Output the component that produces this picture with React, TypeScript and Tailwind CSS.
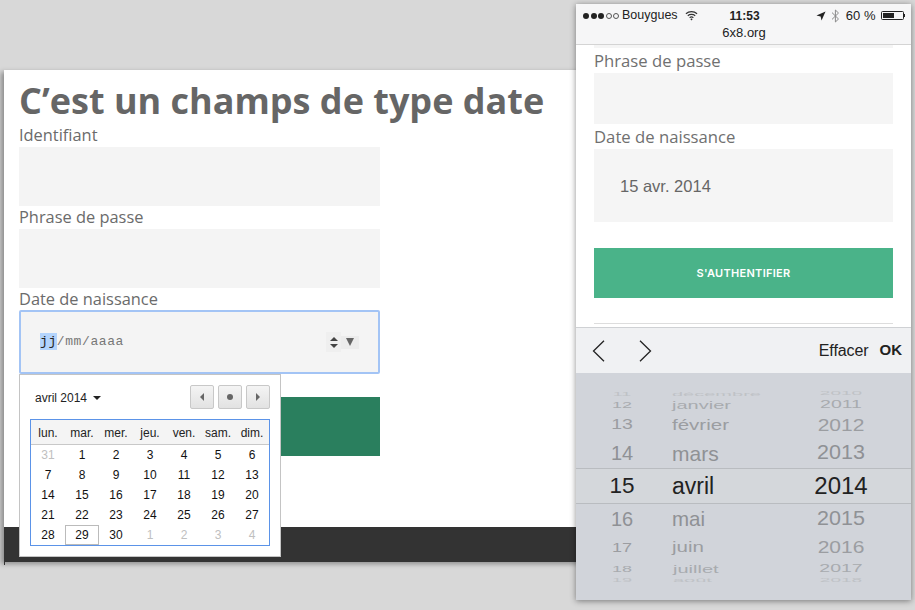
import { useMemo } from 'react';

const openSans = 'font-["Open_Sans",sans-serif]';
const helvetica = 'font-["Liberation_Sans",Arial,sans-serif]';

const weekDays = ['lun.', 'mar.', 'mer.', 'jeu.', 'ven.', 'sam.', 'dim.'];

const calendarDays = [
  31, 1, 2, 3, 4, 5, 6, 7, 8, 9, 10, 11, 12, 13, 14, 15, 16, 17, 18, 19, 20, 21, 22, 23, 24, 25,
  26, 27, 28, 29, 30, 1, 2, 3, 4,
];

const wheelRows = [
  { day: '11', month: 'décembre', year: '2010', height: 'h-[7px]', daySize: 'text-[18px]', monthSize: 'text-[20px]', yearSize: 'text-[19px]', squash: 'scale-y-[0.3]', color: 'text-[#bfc2c6]', monthPad: 'pl-[4px]' },
  { day: '12', month: 'janvier', year: '2011', height: 'h-[15px]', daySize: 'text-[18px]', monthSize: 'text-[20px]', yearSize: 'text-[19.5px]', squash: 'scale-y-[0.55]', color: 'text-[#a8abaf]', monthPad: 'pl-[4px]' },
  { day: '13', month: 'février', year: '2012', height: 'h-[26px]', daySize: 'text-[19.5px]', monthSize: 'text-[20.5px]', yearSize: 'text-[21px]', squash: 'scale-y-[0.75]', color: 'text-[#9b9da1]', monthPad: 'pl-[2px]' },
  { day: '14', month: 'mars', year: '2013', height: 'h-[30px]', daySize: 'text-[20px]', monthSize: 'text-[21px]', yearSize: 'text-[21.5px]', squash: 'scale-y-[0.97]', color: 'text-[#8f9195]', monthPad: 'pl-[1px]' },
  { day: '15', month: 'avril', year: '2014', height: 'h-[36px]', daySize: 'text-[22.5px]', monthSize: 'text-[23px]', yearSize: 'text-[24px]', squash: '', color: 'text-[#222222]', monthPad: '', active: true },
  { day: '16', month: 'mai', year: '2015', height: 'h-[30px]', daySize: 'text-[20px]', monthSize: 'text-[20.5px]', yearSize: 'text-[21.5px]', squash: 'scale-y-[0.97]', color: 'text-[#8f9195]', monthPad: 'pl-[1px]' },
  { day: '17', month: 'juin', year: '2016', height: 'h-[26px]', daySize: 'text-[18px]', monthSize: 'text-[20.5px]', yearSize: 'text-[21px]', squash: 'scale-y-[0.75]', color: 'text-[#9b9da1]', monthPad: 'pl-[1px]' },
  { day: '18', month: 'juillet', year: '2017', height: 'h-[17px]', daySize: 'text-[18px]', monthSize: 'text-[20px]', yearSize: 'text-[19.5px]', squash: 'scale-y-[0.55]', color: 'text-[#a8abaf]', monthPad: 'pl-[5px]' },
  { day: '19', month: 'août', year: '2018', height: 'h-[6px]', daySize: 'text-[18px]', monthSize: 'text-[20px]', yearSize: 'text-[19px]', squash: 'scale-y-[0.25]', color: 'text-[#bfc2c6]', monthPad: 'pl-[5px]' },
];

const PagerButton = ({ children }: { children: React.ReactNode }) => (
  <div className="flex h-[24px] w-[24px] items-center justify-center rounded-[2px] border border-[#c8c8c8] bg-gradient-to-b from-[#f4f4f4] to-[#e2e2e2]">
    {children}
  </div>
);

const CalendarPopup = () => {
  const cells = useMemo(
    () =>
      calendarDays.map((day, index) => ({
        day,
        muted: index === 0 || index > 30,
        today: index === 29,
      })),
    [],
  );

  return (
    <div className={`absolute left-[19px] top-[374px] z-10 h-[183px] w-[262px] border border-[#c4c4c4] bg-white px-[10px] pt-[10px] ${helvetica}`}>
      <div className="flex h-[24px] items-center justify-between">
        <div className="flex items-center gap-[6px] pt-[2px] pl-[5px] text-[12px] text-[#222]">
          <span>avril 2014</span>
          <span className="h-0 w-0 border-x-[4px] border-t-[4px] border-x-transparent border-t-[#222]" />
        </div>
        <div className="flex gap-[4px]">
          <PagerButton>
            <span className="h-0 w-0 border-y-[4px] border-r-[4px] border-y-transparent border-r-[#666]" />
          </PagerButton>
          <PagerButton>
            <span className="h-[6px] w-[6px] rounded-full bg-[#666]" />
          </PagerButton>
          <PagerButton>
            <span className="h-0 w-0 border-y-[4px] border-l-[4px] border-y-transparent border-l-[#666]" />
          </PagerButton>
        </div>
      </div>
      <div className="mt-[10px] h-[127px] w-[240px] border border-[#5b93e8]">
        <div className="grid h-[25px] grid-cols-7 items-center border-b border-[#c8c8c8] bg-[#f4f4f4] pt-[2px] text-center text-[12px] text-[#222]">
          {weekDays.map((name) => (
            <span key={name}>{name}</span>
          ))}
        </div>
        <div className="grid grid-cols-7 text-center text-[12px] leading-[20px]">
          {cells.map((cell, index) => (
            <span
              key={index}
              className={`h-[20px] ${cell.muted ? 'text-[#c0c0c0]' : 'text-[#111]'} ${cell.today ? 'border border-[#bbb] leading-[18px]' : ''}`}
            >
              {cell.day}
            </span>
          ))}
        </div>
      </div>
    </div>
  );
};

const DesktopForm = () => (
  <div className="absolute left-[4px] top-[70px] flex h-[492px] w-[580px] flex-col bg-white shadow-[-3px_2px_5px_rgba(0,0,0,0.35)]">
    <div className={`flex-1 pl-[15px] ${openSans}`}>
      <h1 className="h-[53px] pt-[9px] text-[36px] leading-[44px] font-bold whitespace-nowrap text-[#666]">
        C’est un champs de type date
      </h1>
      <label className="block h-[24px] text-[16.4px] leading-[24px] text-[#6b6b6b]">Identifiant</label>
      <div className="h-[59px] w-[361px] bg-[#f4f4f4]" />
      <label className="mt-px block h-[22px] text-[16.4px] leading-[20px] text-[#6b6b6b]">Phrase de passe</label>
      <div className="h-[59px] w-[361px] bg-[#f4f4f4]" />
      <label className="block h-[22px] text-[16.4px] leading-[22px] text-[#6b6b6b]">Date de naissance</label>
      <div className="flex h-[64px] w-[361px] items-center rounded-[2px] border-2 border-[#a3c4f5] bg-[#f4f4f4] pr-[19px] pl-[19px]">
        <span className="font-['Liberation_Mono',monospace] text-[13px] tracking-[0.6px] text-[#777]">
          <span className="bg-[#b3d4fc] py-px text-[#222]">jj</span>/mm/aaaa
        </span>
        <div className="ml-auto flex items-center">
          <div className="flex h-[20px] w-[15px] flex-col items-center justify-center gap-[3px] bg-[#efefef]">
            <span className="h-0 w-0 border-x-[4px] border-b-[4px] border-x-transparent border-b-[#444]" />
            <span className="h-0 w-0 border-x-[4px] border-t-[4px] border-x-transparent border-t-[#444]" />
          </div>
          <div className="flex h-[13px] w-[18px] items-center justify-center bg-[#ececec]">
            <span className="h-0 w-0 border-x-[4.5px] border-t-[8px] border-x-transparent border-t-[#666]" />
          </div>
        </div>
      </div>
      <div className="mt-[23px] h-[59px] w-[361px] bg-[#2a7f5e]" />
    </div>
    <div className="h-[35px] bg-[#333]" />
    <span className="absolute top-full left-0 h-[3px] w-px bg-[#333]" />
  </div>
);

const StatusBar = () => (
  <div className={`h-[41px] shrink-0 border-b border-[#d4d4d4] bg-[#f6f6f7] pr-[6px] pl-[7px] pt-[4px] text-[#222] ${helvetica}`}>
    <div className="flex h-[15px] items-center text-[12.5px]">
      <div className="flex w-[36px] items-center justify-between">
        {[0, 1, 2].map((i) => (
          <span key={i} className="h-[6px] w-[6px] rounded-full bg-[#222]" />
        ))}
        {[0, 1].map((i) => (
          <span key={i} className="h-[6px] w-[6px] rounded-full border border-[#555]" />
        ))}
      </div>
      <span className="ml-[3px]">Bouygues</span>
      <svg className="ml-[7px]" width="13" height="11" viewBox="0 0 14 11" fill="none" stroke="#333" strokeWidth="1.3">
        <path d="M1 3.6C4.4 .6 9.6 .6 13 3.6" />
        <path d="M3 5.8C5.2 3.9 8.8 3.9 11 5.8" />
        <path d="M5 7.9C6.2 6.9 7.8 6.9 9 7.9" />
        <path d="M6.3 9.2 7 10l.7-.8" fill="#333" />
      </svg>
      <span className="ml-[32px] text-[12px] font-bold">11:53</span>
      <svg className="ml-auto" width="10" height="10" viewBox="0 0 11 11" fill="#222">
        <path d="M10.5 .5 .5 5l4.6 1 1 4.5z" />
      </svg>
      <svg className="ml-[5px]" width="9" height="14" viewBox="0 0 9 14" fill="none" stroke="#8a8a8a" strokeWidth="1">
        <path d="M1 3.6 7.5 10 4.4 13V1l3.1 3L1 10.4" />
      </svg>
      <span className="ml-[6px] text-[13px]">60 %</span>
      <div className="ml-[5px] flex items-center">
        <div className="h-[9px] w-[23px] rounded-[1.5px] border border-[#222] p-px">
          <div className="h-full w-[62%] bg-[#222]" />
        </div>
        <span className="h-[3px] w-[1.5px] bg-[#222]" />
      </div>
    </div>
    <div className="mt-[2px] text-center text-[13px] leading-[15px]">6x8.org</div>
  </div>
);

const WheelPicker = () => (
  <div className={`flex-1 bg-[#d1d4da] pt-[17px] ${helvetica}`}>
    {wheelRows.map((row) => (
      <div
        key={row.day}
        className={`grid grid-cols-[92px_130px_86px] grid-rows-1 items-center overflow-hidden leading-none ${row.height} ${row.color} ${row.active ? 'border-y border-[#b9bcc0] bg-[#d4d7db]' : ''}`}
      >
        <span className={`text-center whitespace-nowrap ${row.daySize} ${row.squash}`}>{row.day}</span>
        <span className={`origin-left pl-[4px] whitespace-nowrap ${row.monthSize} ${row.squash} ${row.monthPad}`}>{row.month}</span>
        <span className={`text-center whitespace-nowrap ${row.yearSize} ${row.squash}`}>{row.year}</span>
      </div>
    ))}
  </div>
);

const PhoneWindow = () => (
  <div className="absolute top-[4px] left-[576px] z-20 flex h-[596px] w-[335px] flex-col bg-white shadow-[0_1px_6px_rgba(0,0,0,0.45)]">
    <StatusBar />
    <div className={`h-[282px] shrink-0 px-[18px] ${openSans}`}>
      <div className="h-[3px] bg-[#f5f5f5]" />
      <label className="block h-[25px] text-[16.7px] leading-[25px] text-[#707070]">Phrase de passe</label>
      <div className="h-[51px] bg-[#f5f5f5]" />
      <label className="block h-[25px] text-[16.7px] leading-[25px] text-[#707070]">Date de naissance</label>
      <div className={`flex h-[73px] items-center bg-[#f5f5f5] pt-[2px] pl-[26px] text-[16.5px] text-[#666] ${helvetica}`}>15 avr. 2014</div>
      <div className="mt-[26px] flex h-[50px] items-center justify-center bg-[#4ab389] pt-px font-['Inter',sans-serif] text-[11px] font-semibold tracking-[0.3px] text-white">
        S'AUTHENTIFIER
      </div>
      <div className="mt-[25px] h-px bg-[#ddd]" />
    </div>
    <div className={`flex h-[46px] shrink-0 items-center border-t border-[#cfd1d4] bg-[#f0f1f3] pr-[9px] pl-[16px] text-[#222] ${helvetica}`}>
      <svg width="13" height="22" viewBox="0 0 13 22" fill="none" stroke="#222" strokeWidth="1.3">
        <path d="M12 .8 1.5 11 12 21.2" />
      </svg>
      <svg className="ml-[34px]" width="13" height="22" viewBox="0 0 13 22" fill="none" stroke="#222" strokeWidth="1.3">
        <path d="M1 .8 11.5 11 1 21.2" />
      </svg>
      <span className="ml-auto text-[16px] tracking-[-0.1px]">Effacer</span>
      <span className="ml-[11px] text-[15px] font-bold">OK</span>
    </div>
    <WheelPicker />
  </div>
);

export default function App() {
  return (
    <div className="relative h-[610px] w-[915px] overflow-hidden bg-[#d8d8d8]">
      <DesktopForm />
      <CalendarPopup />
      <PhoneWindow />
    </div>
  );
}
